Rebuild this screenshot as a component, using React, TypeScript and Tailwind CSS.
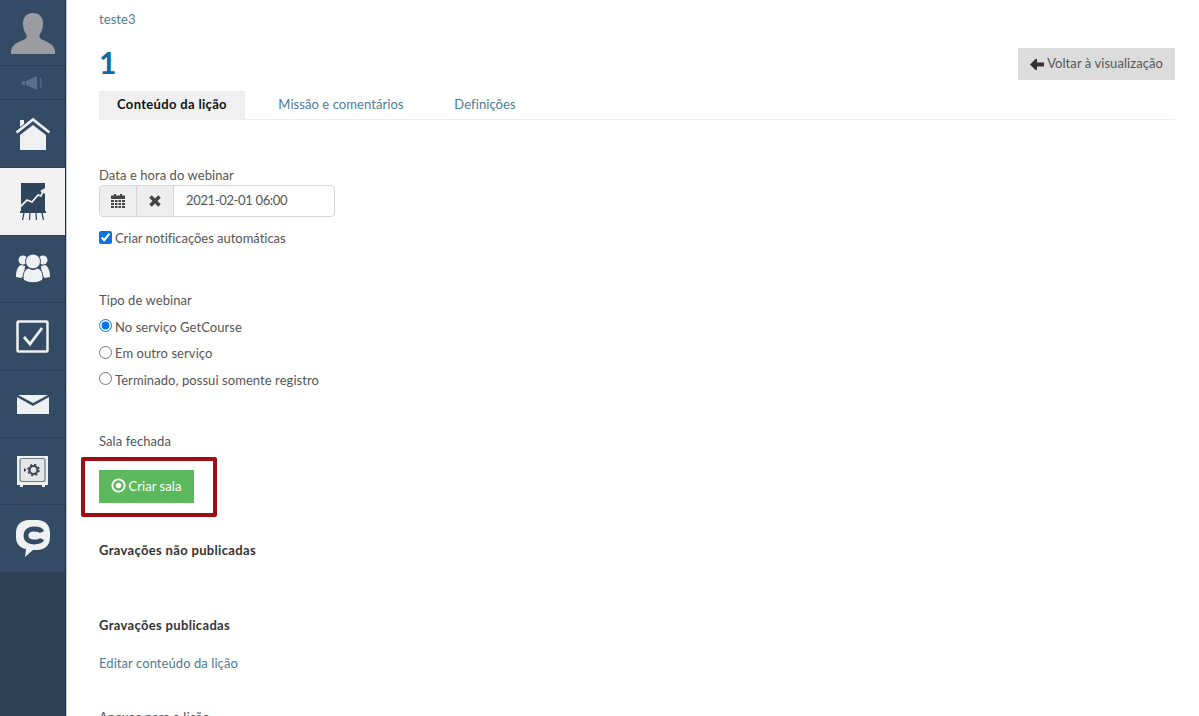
import React from 'react';

const navBorder = 'border-b border-[#2a3f55]';

const Avatar = () => (
  <svg width="46" height="46" viewBox="0 0 46 46">
    <path
      fill="#9a9c9f"
      d="M23 3c6 0 10 4 10 10 0 5-1 8-3 11-1 2-1 4 1 5 5 3 13 4 14 12v3H1v-3c1-8 9-9 14-12 2-1 2-3 1-5-2-3-3-6-3-11 0-6 4-10 10-10z"
    />
  </svg>
);

const Speaker = () => (
  <svg width="22" height="16" viewBox="0 0 22 16">
    <path fill="#5a7089" d="M0 6h3v4H0zM4 6l11-5v14L4 10z" />
    <path fill="none" stroke="#5a7089" strokeWidth="1.2" d="M18 3c1.500 3 1.500 7 0 10" />
  </svg>
);

const Home = () => (
  <svg width="36" height="33" viewBox="0 0 36 33">
    <path fill="#eef0f1" d="M5 3h4v4l-4 3zM5 18L18 8l13 10v15H5z" />
    <path fill="none" stroke="#eef0f1" strokeWidth="2.600" d="M1.500 15.500L18 2.500l16.500 13" />
  </svg>
);

const Chart = () => (
  <svg width="26" height="38" viewBox="0 0 26 38">
    <path fill="#2f455c" d="M1 0h24v28H1z" />
    <path fill="none" stroke="#f0f0f0" strokeWidth="1.800" d="M0 24l7-7 5 2 6-7 3 1 2-5" />
    <path fill="#f0f0f0" d="M20 8l5-3v6z" />
    <path fill="#2f455c" d="M0 28h26v2H0z" />
    <path fill="none" stroke="#2f455c" strokeWidth="1.200" d="M4 30L2.500 37M10 30l-.5 7M16 30l.5 7M22 30l1.500 7" />
  </svg>
);

const Users = () => (
  <svg width="34" height="30" viewBox="0 0 34 30">
    <circle cx="7" cy="6" r="4.500" fill="#eef0f1" />
    <circle cx="27" cy="6" r="4.500" fill="#eef0f1" />
    <path fill="#eef0f1" d="M0 22c0-5 2-10 5-11l4 1-1 10-3 2-5-1zM34 22c0-5-2-10-5-11l-4 1 1 10 3 2 5-1z" />
    <circle cx="17" cy="7.500" r="7.500" fill="#eef0f1" stroke="#334b64" strokeWidth="1" />
    <path fill="#eef0f1" stroke="#334b64" strokeWidth="1" d="M7 25c0-7 2-10 6-11 2 2 6 2 8 0 4 1 6 4 6 11-3 5-17 5-20 0z" />
  </svg>
);

const Check = () => (
  <svg width="33" height="33" viewBox="0 0 33 33">
    <rect x="1.500" y="1.500" width="30" height="30" rx="1" fill="none" stroke="#eef0f1" strokeWidth="2.500" />
    <path fill="none" stroke="#eef0f1" strokeWidth="2.800" d="M8 17l6 7L26 8" />
  </svg>
);

const Mail = () => (
  <svg width="32" height="19" viewBox="0 0 32 19">
    <path fill="#eef0f1" d="M0 2l16 9L32 2v17H0z" />
    <path fill="#eef0f1" d="M1 0h30L16 8z" />
  </svg>
);

const Safe = () => (
  <svg width="33" height="33" viewBox="0 0 33 33">
    <path fill="#eef0f1" d="M1 1h31v29h-3v2h-3v-2H7v2H4v-2H1z" />
    <rect x="4" y="3.500" width="25" height="23" rx="2" fill="#e4e6e8" stroke="#6d7883" strokeWidth="1.200" />
    <circle cx="17.500" cy="15" r="4" fill="none" stroke="#3c4752" strokeWidth="2.200" />
    <circle cx="17.500" cy="15" r="5.500" fill="none" stroke="#3c4752" strokeWidth="1.500" strokeDasharray="2.200 2.120" />
    <path fill="#3c4752" d="M8 13l2.500 2-2.500 2z" />
  </svg>
);

const ChatC = () => (
  <svg width="34" height="37" viewBox="0 0 34 37">
    <path
      fill="#eef0f1"
      d="M13 0h8c8 0 13 5 13 13v4c0 8-5 13-13 13h-4l-8 7 1-8C4 28 0 24 0 17v-4C0 5 5 0 13 0z"
    />
    <path fill="none" stroke="#334b64" strokeWidth="4.800" d="M26 12c-1-2-4-3-8-3-5 0-8 2-8 6.500s3 6.500 8 6.500c4 0 7-1 8-3" />
  </svg>
);

const navItems = [
  { key: 'home', icon: <Home />, height: 'h-[68px]' },
  { key: 'lessons', icon: <Chart />, height: 'h-[68px]', active: true },
  { key: 'users', icon: <Users />, height: 'h-[67px]' },
  { key: 'tasks', icon: <Check />, height: 'h-[68px]' },
  { key: 'mail', icon: <Mail />, height: 'h-[67px]' },
  { key: 'safe', icon: <Safe />, height: 'h-[67px]' },
  { key: 'chat', icon: <ChatC />, height: 'h-[68px]' },
];

const Sidebar = () => (
  <aside className="w-[67px] shrink-0 h-[716px] bg-[#2f4358] border-r border-[#c4ccd4]">
    <div className="h-full border-r border-[#22344a] flex flex-col">
      <div className={`h-[66px] bg-[#334b64] flex items-center justify-center ${navBorder}`}>
        <Avatar />
      </div>
      <div className={`h-[34px] bg-[#334b64] flex items-center justify-center ${navBorder}`}>
        <Speaker />
      </div>
      {navItems.map((item) => (
        <div
          key={item.key}
          className={`${item.height} flex items-center justify-center ${navBorder} ${item.active ? 'bg-[#f1f1f1]' : 'bg-[#334b64]'}`}
        >
          {item.icon}
        </div>
      ))}
    </div>
  </aside>
);

const Radio = ({ checked, label }: { checked?: boolean; label: string }) => (
  <label className="flex items-center h-[26.500px]">
    <input type="radio" name="type" defaultChecked={checked} className="w-[13px] h-[13px] mr-[3px] mb-[3px] accent-[#0b74e5]" />
    {label}
  </label>
);

export default function App() {
  return (
    <div className="flex h-[716px] overflow-hidden bg-white text-[13px] tracking-[0.07px] text-[#555] font-['Lato','Liberation_Sans',sans-serif]">
      <Sidebar />
      <main className="flex-1 pl-[32px] pr-[24px] overflow-hidden">
        <a className="block mt-[11px] text-[#4d7a99] leading-[17px]">teste3</a>

        <div className="flex items-center justify-between mt-[20px] h-[32px]">
          <h1 className="text-[30px] font-bold text-[#0f68a8] leading-none pb-[4px]">1</h1>
          <button className="h-[32px] px-3 bg-[#dcdcdc] text-[#555] flex items-center gap-[3px]">
            <svg width="14" height="11" viewBox="0 0 14 11">
              <path fill="#333" d="M0 5.500L5.500 0h1.500v3.500h7v4H7V11H5.500z" />
            </svg>
            Voltar à visualização
          </button>
        </div>

        <div className="flex mt-[11px] h-[28px] border-b border-[#eeeeee] box-content items-stretch">
          <div className="w-[146px] bg-[#f0f0f0] flex items-center justify-center font-bold text-[#111] tracking-[0.33px]">Conteúdo da lição</div>
          <div className="w-[192px] flex items-center justify-center text-[#4d7a99]">Missão e comentários</div>
          <div className="w-[100px] -ml-[2px] flex items-center justify-center text-[#4d7a99]">Definições</div>
        </div>

        <div className="mt-[47px] leading-[17px]">Data e hora do webinar</div>
        <div className="flex mt-[1px] w-[236px] h-[32px] border border-[#d5d5d5] rounded-[4px] overflow-hidden">
          <div className="w-[37px] bg-[#eeeeee] border-r border-[#d5d5d5] flex items-center justify-center">
            <svg width="14" height="14" viewBox="0 0 14 14">
              <path fill="#444" d="M3 0h2v1.500h4V0h2v1.500h3V5H0V1.500h3z" />
              <path fill="#444" d="M0 6h3v2H0zM4 6h2.500v2H4zM7.500 6H10v2H7.500zM11 6h3v2h-3zM0 9h3v2H0zM4 9h2.500v2H4zM7.500 9H10v2H7.500zM11 9h3v2h-3zM0 12h3v2H0zM4 12h2.500v2H4zM7.500 12H10v2H7.500zM11 12h3v2h-3z" />
            </svg>
          </div>
          <div className="w-[37px] bg-[#eeeeee] border-r border-[#d5d5d5] flex items-center justify-center">
            <svg width="12" height="12" viewBox="0 0 12 12">
              <path stroke="#444" strokeWidth="3.500" d="M1.500 1.500l9 9M10.500 1.500l-9 9" />
            </svg>
          </div>
          <div className="flex-1 pl-3 flex items-center tracking-[-0.35px]">2021-02-01 06:00</div>
        </div>
        <label className="flex items-center mt-[12px] h-[20px] tracking-[-0.03px]">
          <input type="checkbox" defaultChecked className="w-[13px] h-[13px] mr-[3px] mb-[3px] accent-[#0b74e5]" />
          Criar notificações automáticas
        </label>

        <div className="mt-[43px] leading-[17px]">Tipo de webinar</div>
        <div className="mt-[5px]">
          <Radio checked label="No serviço GetCourse" />
          <Radio label="Em outro serviço" />
          <Radio label="Terminado, possui somente registro" />
        </div>

        <div className="mt-[39px] leading-[17px]">Sala fechada</div>
        <div className="w-[136px] h-[60px] mt-[7px] -ml-[18px] border-[4px] border-[#a00c14] rounded-[2px] flex items-center pl-[14px]">
          <button className="w-[95px] h-[33px] bg-[#5cb85c] text-white flex items-center justify-center gap-[2px]">
            <svg width="15" height="15" viewBox="0 0 15 15" className="mb-[2px]">
              <circle cx="7.500" cy="7.500" r="6.100" fill="none" stroke="#fff" strokeWidth="1.900" />
              <circle cx="7.500" cy="7.500" r="2.700" fill="#fff" />
            </svg>
            Criar sala
          </button>
        </div>

        <div className="mt-[25px] font-bold text-[#333] leading-[17px] tracking-[0.33px]">Gravações não publicadas</div>
        <div className="mt-[58px] font-bold text-[#333] leading-[17px] tracking-[0.33px]">Gravações publicadas</div>
        <a className="block mt-[21px] text-[#4d7a99] leading-[17px]">Editar conteúdo da lição</a>
        <div className="mt-[37px] leading-[17px]">Anexos para a lição</div>
      </main>
    </div>
  );
}
